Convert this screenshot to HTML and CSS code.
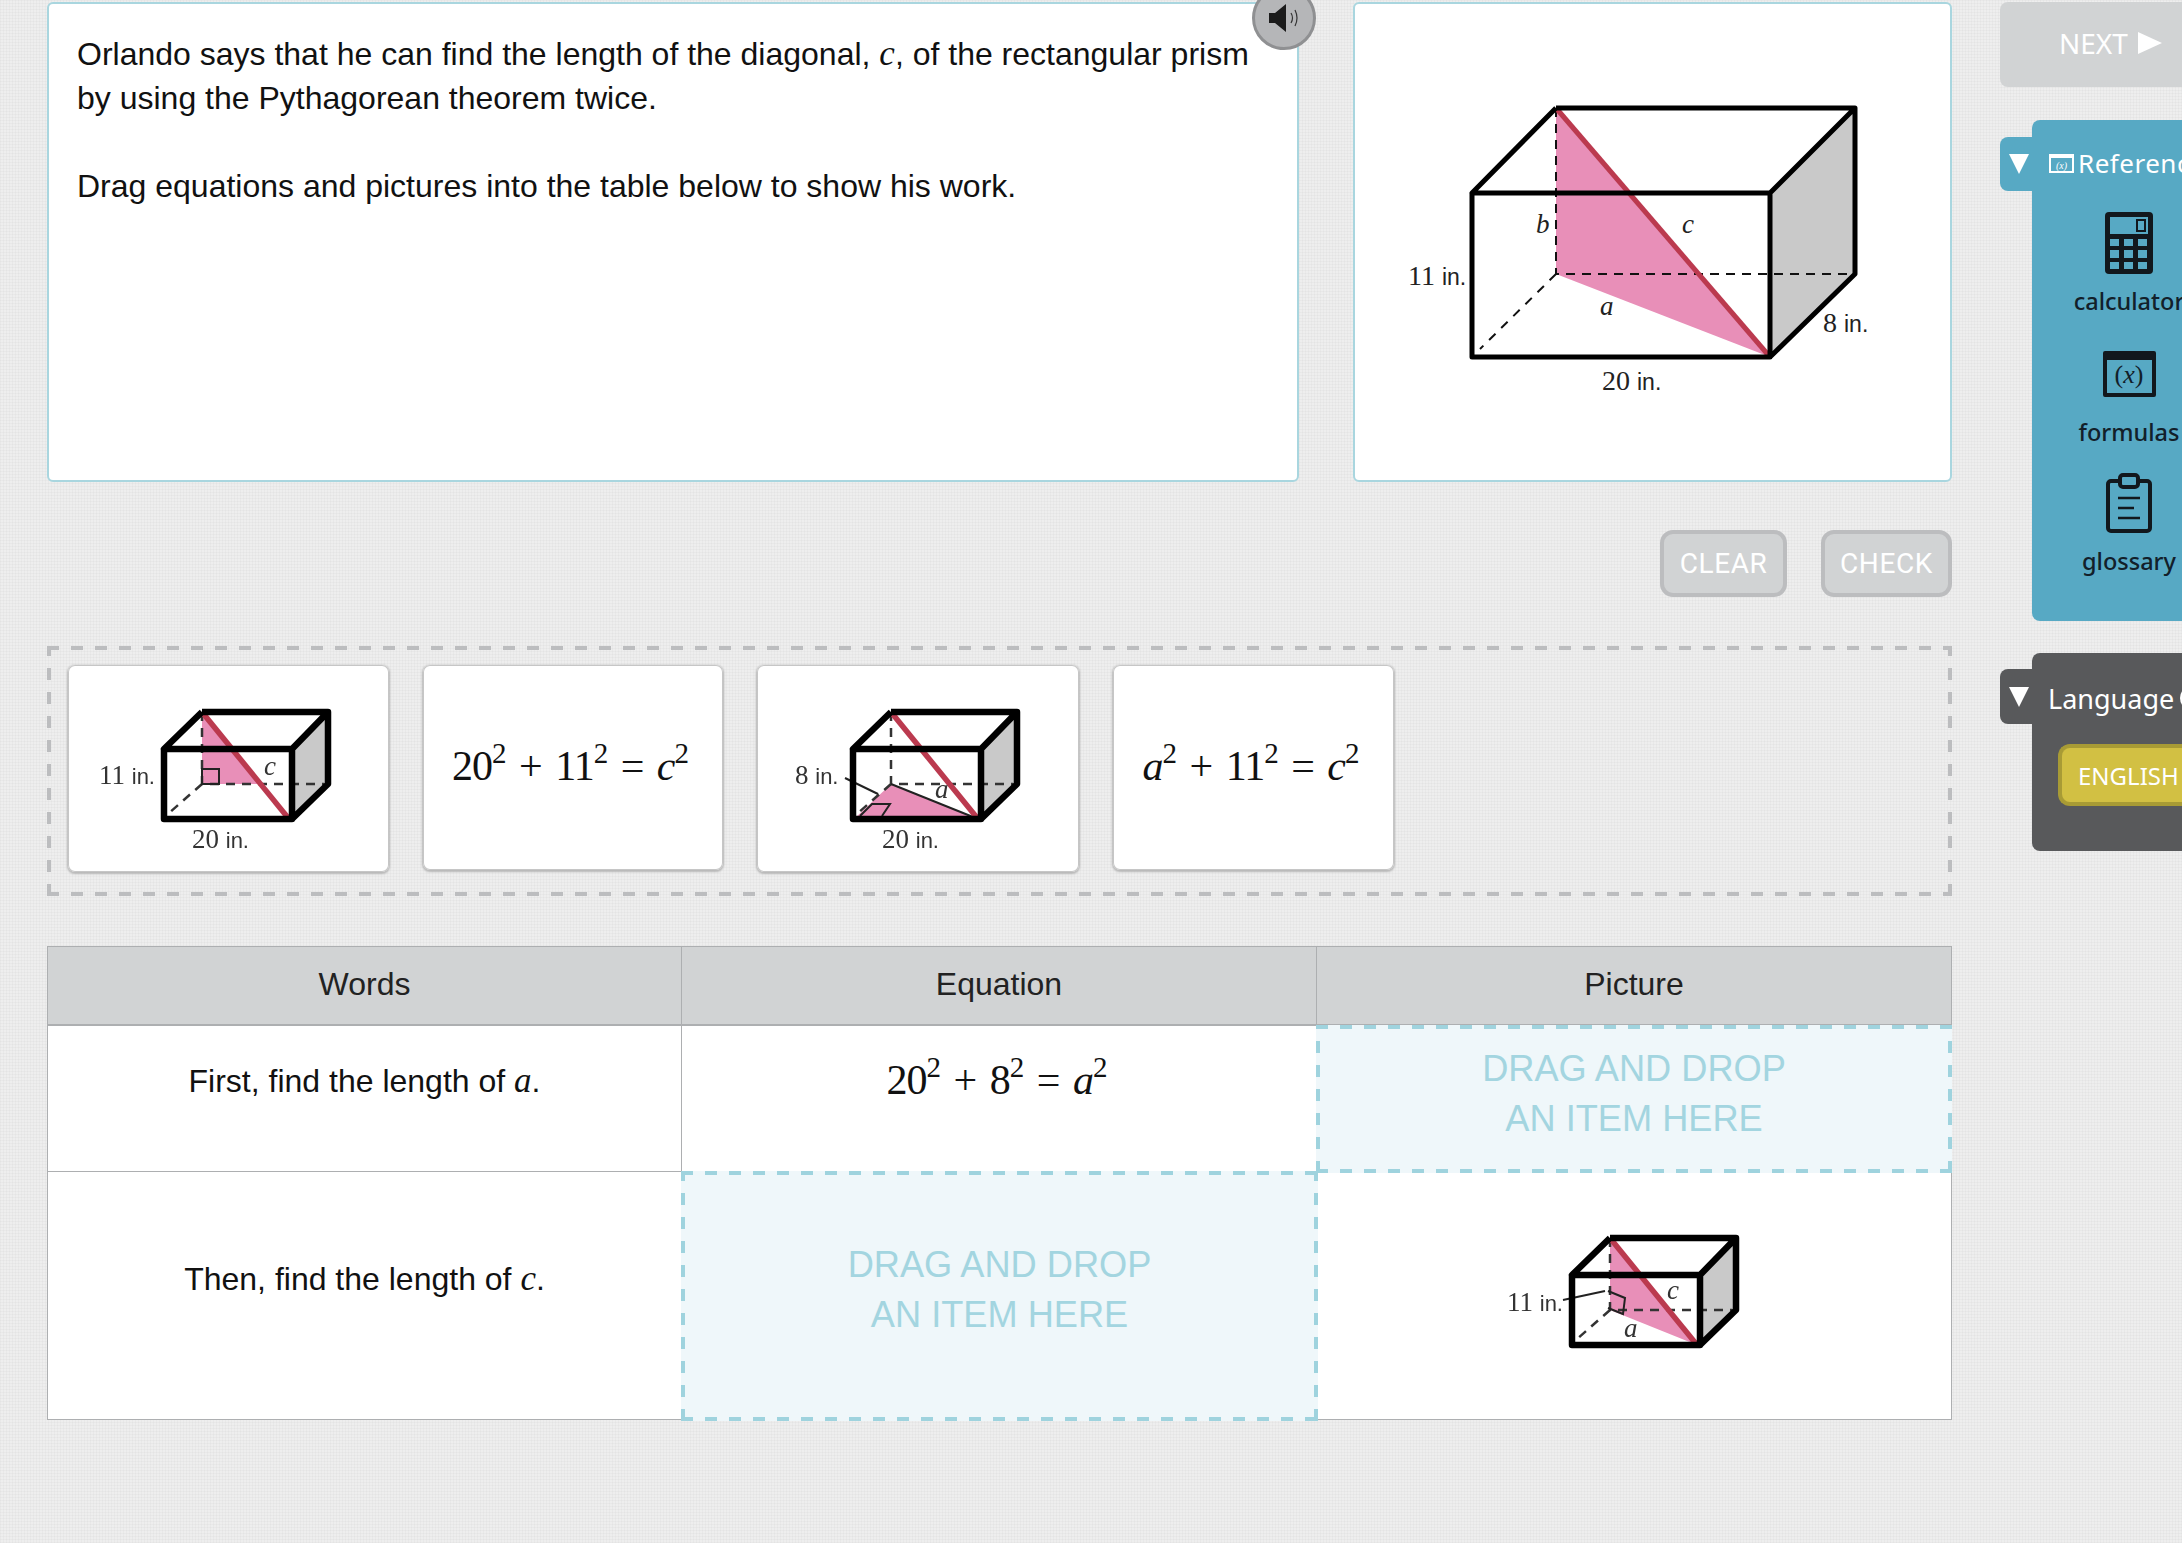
FILE: index.html
```html
<!DOCTYPE html>
<html lang="en">
<head>
<meta charset="utf-8">
<title>Pythagorean theorem item</title>
<link rel="stylesheet" href="styles.css">
</head>
<body>
<div class="page">
  <main class="main">
    <section class="top-row">
      <div class="panel question">
        <p>Orlando says that he can find the length of the diagonal, <i class="var">c</i>, of the rectangular prism<br>by using the Pythagorean theorem twice.</p>
        <p class="second">Drag equations and pictures into the table below to show his work.</p>
        <button class="speaker" aria-label="Play audio">
          <svg viewBox="0 0 30 28" width="30" height="28"><path d="M0 9h6L17 0v28L6 19H0z" fill="#1b1b1b"/><path d="M22 9q3 5 0 10M26 6q4 8 0 16" fill="none" stroke="#333" stroke-width="1.2"/></svg>
        </button>
      </div>
      <div class="panel figure">
        <svg class="big-fig" viewBox="0 0 430 330" width="430" height="330">
          <polygon points="146,3 146,169 360,252" fill="#e88fb8"/>
          <polygon points="360,88 445,3 445,169 360,252" fill="#c9c9c9"/>
          <path d="M146 3V169H445" stroke="#111" stroke-width="2" stroke-dasharray="9 7" fill="none"/>
          <path d="M146 169L70 244" stroke="#111" stroke-width="2" stroke-dasharray="9 8" fill="none"/>
          <path d="M146 3L360 252" stroke="#bb3a4f" stroke-width="5"/>
          <path d="M146 3H445V169L360 252M146 3L62 88H360L445 3M62 88V252H360V88" fill="none" stroke="#000" stroke-width="5" stroke-linejoin="round"/>
          <text class="fig-label" x="-2" y="180">11 <tspan class="fig-in">in.</tspan></text>
          <text class="fig-label" x="192" y="285">20 <tspan class="fig-in">in.</tspan></text>
          <text class="fig-label" x="413" y="227">8 <tspan class="fig-in">in.</tspan></text>
          <text class="fig-var" x="126" y="128">b</text>
          <text class="fig-var" x="272" y="128">c</text>
          <text class="fig-var" x="190" y="210">a</text>
        </svg>
      </div>
    </section>
    <div class="actions">
      <button class="btn btn-clear">CLEAR</button>
      <button class="btn btn-check">CHECK</button>
    </div>
    <section class="tray">
      <div class="card card-pic card-a">
        <svg class="mini" viewBox="0 0 260 170" width="260" height="170">
          <polygon points="103,27 103,99 161,99" fill="#e88fb8"/>
          <polygon points="193,64 229,27 229,99 193,134" fill="#c9c9c9"/>
          <path d="M103 27V99H225M103 99L70 128" stroke="#333" stroke-width="2.5" stroke-dasharray="9 7" fill="none"/>
          <path d="M103 84H120V99H103z" stroke="#222" stroke-width="2" fill="none"/>
          <path d="M103 27L190 134" stroke="#bb3a4f" stroke-width="5.5"/>
          <path d="M103 27H229V99L193 134M103 27L65 64H193L229 27M65 64V134H193V64" fill="none" stroke="#000" stroke-width="6.5" stroke-linejoin="round"/>
          <text class="mini-label" x="0" y="99">11 <tspan class="mini-in">in.</tspan></text>
          <text class="mini-label" x="93" y="163">20 <tspan class="mini-in">in.</tspan></text>
          <text class="mini-var" x="165" y="90">c</text>
        </svg>
      </div>
      <div class="card card-eq card-b"><span class="math">20<sup>2</sup> + 11<sup>2</sup> = <i>c</i><sup>2</sup></span></div>
      <div class="card card-pic card-c">
        <svg class="mini" viewBox="0 0 260 170" width="260" height="170">
          <polygon points="103,99 190,134 66,134" fill="#e88fb8"/>
          <polygon points="193,64 229,27 229,99 193,134" fill="#c9c9c9"/>
          <path d="M103 27V99H225M103 99L70 128" stroke="#333" stroke-width="2.5" stroke-dasharray="9 7" fill="none"/>
          <path d="M103 99L190 134" stroke="#222" stroke-width="2"/>
          <path d="M57 93L90 109" stroke="#222" stroke-width="2"/>
          <path d="M72 131L84 119H102L94 131" stroke="#222" stroke-width="2" fill="none"/>
          <path d="M103 27L190 134" stroke="#bb3a4f" stroke-width="5.5"/>
          <path d="M103 27H229V99L193 134M103 27L65 64H193L229 27M65 64V134H193V64" fill="none" stroke="#000" stroke-width="6.5" stroke-linejoin="round"/>
          <text class="mini-label" x="7" y="99">8 <tspan class="mini-in">in.</tspan></text>
          <text class="mini-label" x="94" y="163">20 <tspan class="mini-in">in.</tspan></text>
          <text class="mini-var" x="147" y="113">a</text>
        </svg>
      </div>
      <div class="card card-eq card-d"><span class="math"><i>a</i><sup>2</sup> + 11<sup>2</sup> = <i>c</i><sup>2</sup></span></div>
    </section>
    <section class="table">
      <div class="th">Words</div>
      <div class="th">Equation</div>
      <div class="th">Picture</div>
      <div class="td row1 c1"><span>First, find the length of <i class="var">a</i>.</span></div>
      <div class="td row1 c2"><span class="math">20<sup>2</sup> + 8<sup>2</sup> = <i>a</i><sup>2</sup></span></div>
      <div class="drop row1 c3">DRAG AND DROP<br>AN ITEM HERE</div>
      <div class="td row2 c1"><span>Then, find the length of <i class="var">c</i>.</span></div>
      <div class="drop row2 c2">DRAG AND DROP<br>AN ITEM HERE</div>
      <div class="td row2 c3 placed">
        <svg class="mini" viewBox="0 0 260 170" width="260" height="170">
          <polygon points="103,27 103,99 190,134" fill="#e88fb8"/>
          <polygon points="193,64 229,27 229,99 193,134" fill="#c9c9c9"/>
          <path d="M103 27V99H225M103 99L70 128" stroke="#333" stroke-width="2.5" stroke-dasharray="9 7" fill="none"/>
          <path d="M56 89L98 80" stroke="#222" stroke-width="2"/>
          <path d="M101 80L118 87L116 103L101 97" stroke="#222" stroke-width="2" fill="none"/>
          <path d="M103 27L190 134" stroke="#bb3a4f" stroke-width="5.5"/>
          <path d="M103 27H229V99L193 134M103 27L65 64H193L229 27M65 64V134H193V64" fill="none" stroke="#000" stroke-width="6.5" stroke-linejoin="round"/>
          <text class="mini-label" x="0" y="100">11 <tspan class="mini-in">in.</tspan></text>
          <text class="mini-var" x="160" y="88">c</text>
          <text class="mini-var" x="117" y="126">a</text>
        </svg>
      </div>
    </section>
  </main>
  <aside class="side">
    <div class="next">NEXT<svg viewBox="0 0 24 22" width="24" height="22"><path d="M0 0L24 11L0 22z" fill="#fff"/></svg></div>
    <div class="dock dock-ref">
      <div class="tab"><svg viewBox="0 0 20 20" width="20" height="20"><path d="M0 0H20L10 20z" fill="#fff"/></svg></div>
      <div class="dock-body">
        <div class="dock-title"><svg viewBox="0 0 25 19" width="25" height="19"><rect x="1" y="1" width="23" height="17" fill="none" stroke="#fff" stroke-width="2"/><rect x="1" y="1" width="23" height="3" fill="#fff"/><text class="ref-x" x="12.5" y="15">(x)</text></svg>Reference</div>
        <div class="tool tool-calc">
          <svg viewBox="0 0 48 62" width="48" height="62"><rect width="48" height="62" rx="4" fill="#12181d"/><rect x="5" y="5" width="38" height="17" fill="#57a9c4"/><rect x="32" y="8" width="8" height="11" fill="#57a9c4" stroke="#12181d" stroke-width="2"/><g fill="#57a9c4"><rect x="5" y="27" width="9" height="7"/><rect x="19" y="27" width="9" height="7"/><rect x="33" y="27" width="9" height="7"/><rect x="5" y="38" width="9" height="8"/><rect x="19" y="38" width="9" height="8"/><rect x="33" y="38" width="9" height="8"/><rect x="5" y="50" width="9" height="7"/><rect x="19" y="50" width="9" height="7"/><rect x="33" y="50" width="9" height="7"/></g></svg>
          <span>calculator</span>
        </div>
        <div class="tool tool-formulas">
          <div class="fx"><span>(<i>x</i>)</span></div>
          <span>formulas</span>
        </div>
        <div class="tool tool-glossary">
          <svg viewBox="0 0 46 60" width="46" height="60"><rect x="2" y="8" width="42" height="50" rx="3" fill="none" stroke="#12181d" stroke-width="4"/><rect x="14" y="2" width="18" height="12" rx="3" fill="#57a9c4" stroke="#12181d" stroke-width="4"/><path d="M12 25H34M12 35H28M12 45H34" stroke="#12181d" stroke-width="2.5"/></svg>
          <span>glossary</span>
        </div>
      </div>
    </div>
    <div class="dock dock-lang">
      <div class="tab"><svg viewBox="0 0 20 20" width="20" height="20"><path d="M0 0H20L10 20z" fill="#fff"/></svg></div>
      <div class="dock-body">
        <div class="lang-title">Language<b class="dot"></b></div>
        <div class="english">ENGLISH</div>
      </div>
    </div>
  </aside>
</div>
</body>
</html>
```
FILE: styles.css
```css
* { box-sizing: border-box; }
html, body { margin: 0; padding: 0; }
body {
  width: 2182px; height: 1543px; overflow: hidden;
  font-family: "Liberation Sans", Arial, sans-serif; color: #111;
  background-color: #eeeeee;
  background-image:
    repeating-linear-gradient(0deg, rgba(0,0,0,.025) 0 1px, transparent 1px 3px),
    repeating-linear-gradient(90deg, rgba(0,0,0,.025) 0 1px, transparent 1px 3px);
}
.page { display: flex; align-items: flex-start; width: 2182px; height: 1543px; overflow: hidden; }
.main { width: 1905px; margin-left: 47px; padding-top: 2px; flex: none; }
.top-row { display: flex; gap: 54px; height: 480px; }
.panel { background: #fff; border: 2px solid #a9d6df; border-radius: 6px; position: relative; }
.question { width: 1252px; padding: 28px 0 0 28px; font-size: 32px; line-height: 44px; }
.question p { margin: 0; white-space: nowrap; }
.question .second { margin-top: 44px; }
.var { font-family: "Liberation Serif", serif; font-style: italic; font-size: 35px; }
.speaker {
  position: absolute; right: -19px; top: -18px; width: 64px; height: 64px; padding: 0;
  border-radius: 50%; background: #b5b6b8; border: 3px solid #8f9092;
  display: flex; align-items: center; justify-content: center;
}
.figure { width: 599px; display: flex; align-items: flex-start; }
.big-fig { margin: 101px 0 0 55px; overflow: visible; }
.fig-label { font: 28px "Liberation Serif", serif; fill: #222; }
.fig-in { font: 23px "Liberation Sans", sans-serif; }
.fig-var { font: italic 27px "Liberation Serif", serif; fill: #222; }
.actions { display: flex; justify-content: flex-end; gap: 34px; margin-top: 48px; }
.btn {
  height: 67px; background: #d1d3d4; border: 4px solid #bcbdbf; border-radius: 13px;
  color: #fff; font: 28px Roboto, sans-serif; letter-spacing: .6px; padding: 0;
}
.btn-clear { width: 127px; }
.btn-check { width: 131px; }
.tray {
  margin-top: 49px; height: 250px; padding: 19px 21px; display: flex; align-items: flex-start; gap: 34px;
  background:
    repeating-linear-gradient(90deg, #bcbdbf 0 12px, transparent 12px 24px) left top / 100% 4px no-repeat,
    repeating-linear-gradient(90deg, #bcbdbf 0 12px, transparent 12px 24px) left bottom / 100% 4px no-repeat,
    repeating-linear-gradient(0deg, #bcbdbf 0 12px, transparent 12px 24px) left top / 4px 100% no-repeat,
    repeating-linear-gradient(0deg, #bcbdbf 0 12px, transparent 12px 24px) right top / 4px 100% no-repeat;
}
.card {
  background: #fff; border-radius: 7px; box-shadow: inset 0 0 0 1px #c6c6c6, 0 1px 2px 1px #b8b8b8;
  display: flex; align-items: center; justify-content: center;
}
.card-pic { padding-top: 3px; }
.card-a { width: 321px; height: 207px; }
.card-b { width: 300px; height: 205px; }
.card-c { width: 322px; height: 207px; }
.card-d { width: 281px; height: 205px; }
.card-eq { padding-bottom: 4px; }
.math { font: 42px "Liberation Serif", serif; letter-spacing: -1px; word-spacing: 4px; white-space: nowrap; color: #111; margin-right: 6px; }
.math sup { font-size: 29px; line-height: 0; vertical-align: 17px; }
.mini { overflow: visible; filter: blur(.6px); }
.mini-label { font: 27px "Liberation Serif", serif; fill: #333; }
.mini-in { font: 22px "Liberation Sans", sans-serif; }
.mini-var { font: italic 27px "Liberation Serif", serif; fill: #333; }
.table {
  margin-top: 50px; display: grid; grid-template-columns: 635px 635px 635px;
  grid-template-rows: 80px 146px 248px; background: #fff; font-size: 32px;
}
.th {
  background: #d1d3d4; border: 1px solid #adafb1; border-bottom-width: 2px; border-left-width: 0; padding-bottom: 3px;
  display: flex; align-items: center; justify-content: center; color: #222;
}
.th:first-child { border-left-width: 1px; }
.td { display: flex; justify-content: center; border-bottom: 1px solid #adafb1; }
.td.c1 { border-left: 1px solid #adafb1; border-right: 1px solid #adafb1; }
.td.c3 { border-right: 1px solid #adafb1; }
.row1.c1 { padding-top: 35px; }
.row1.c2 { padding-top: 30px; border-bottom: 0; }
.row2.c1 { align-items: center; padding-bottom: 34px; }
.placed { align-items: flex-start; padding: 39px 0 0 6px; }
.drop {
  display: flex; align-items: center; justify-content: center; text-align: center;
  color: #a3d5e0; font-size: 36.2px; line-height: 50px; position: relative; z-index: 1;
  background:
    repeating-linear-gradient(90deg, #9fd3de 0 12px, transparent 12px 24px) left top / 100% 4px no-repeat,
    repeating-linear-gradient(90deg, #9fd3de 0 12px, transparent 12px 24px) left bottom / 100% 4px no-repeat,
    repeating-linear-gradient(0deg, #9fd3de 0 12px, transparent 12px 24px) left top / 4px 100% no-repeat,
    repeating-linear-gradient(0deg, #9fd3de 0 12px, transparent 12px 24px) right top / 4px 100% no-repeat,
    #eff7fa;
}
.drop.row1 { padding-bottom: 10px; margin: -1px 0 -1px -1px; }
.drop.row2 { padding-bottom: 12px; margin: -1px; }
.side { width: 182px; margin-left: 48px; flex: none; padding-top: 2px; overflow: hidden; height: 1543px; }
.next {
  width: 200px; height: 85px; background: #d1d3d4; border-radius: 8px 0 0 8px;
  color: #fff; font: 28px "Noto Sans", sans-serif; display: flex; align-items: center; gap: 10px; padding: 0 0 4px 59px;
}
.dock { display: flex; align-items: flex-start; }
.dock-ref { margin-top: 33px; }
.dock-lang { margin-top: 32px; }
.tab {
  width: 32px; flex: none; margin-top: 17px; border-radius: 8px 0 0 8px;
  display: flex; justify-content: center; padding-left: 6px;
}
.dock-ref .tab { height: 54px; background: #57a9c4; padding-top: 17px; }
.dock-lang .tab { height: 55px; background: #58595b; margin-top: 16px; padding-top: 18px; }
.dock-body { width: 200px; flex: none; border-radius: 8px 0 0 8px; }
.dock-ref .dock-body { height: 501px; background: #57a9c4; padding: 21px 0 0 17px; }
.dock-lang .dock-body { height: 198px; background: #58595b; padding: 0 0 0 16px; }
.dock-title { color: #fff; font: 26px "Noto Sans", sans-serif; letter-spacing: .5px; display: flex; align-items: center; gap: 4px; height: 44px; white-space: nowrap; }
.ref-x { font: italic 10px "Liberation Serif", serif; fill: #fff; text-anchor: middle; letter-spacing: 0; }
.tool { width: 160px; display: flex; flex-direction: column; align-items: center; color: #12202a; font: 500 23.5px "Noto Sans", sans-serif; white-space: nowrap; }
.tool > span { line-height: 32px; }
.tool-calc { margin-top: 27px; }
.tool-calc > span { margin-top: 11px; }
.tool-formulas { margin-top: 34px; }
.tool-formulas > span { margin-top: 19px; }
.tool-glossary { margin-top: 25px; }
.tool-glossary > span { margin-top: 12px; }
.fx { width: 53px; height: 46px; border: 4px solid #12181d; border-top-width: 9px; border-radius: 2px; font: 26px "Liberation Serif", serif; text-align: center; line-height: 30px; color: #12202a; }
.lang-title { color: #fff; font: 27px "Noto Sans", sans-serif; margin-top: 23px; display: flex; align-items: center; gap: 6px; height: 44px; }
.dot { width: 24px; height: 24px; border-radius: 50%; background: #fff; flex: none; }
.english {
  margin-top: 24px; margin-left: 10px; height: 62px; background: #d2c043; border: 4px solid #a89b35; border-right: 0;
  border-radius: 12px 0 0 12px; color: #fff; font: 24px "Noto Sans", sans-serif; display: flex; align-items: center; padding-left: 16px;
}
```
